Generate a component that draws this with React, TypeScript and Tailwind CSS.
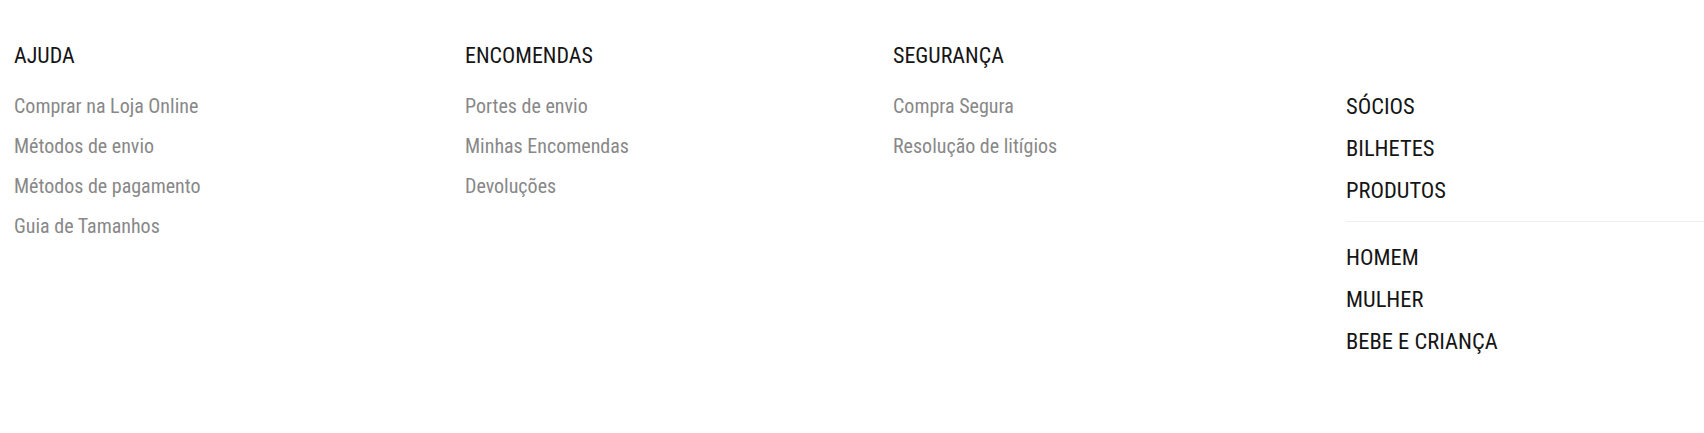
const colunas = [
  {
    titulo: "AJUDA",
    links: ["Comprar na Loja Online", "Métodos de envio", "Métodos de pagamento", "Guia de Tamanhos"],
  },
  {
    titulo: "ENCOMENDAS",
    links: ["Portes de envio", "Minhas Encomendas", "Devoluções"],
  },
  {
    titulo: "SEGURANÇA",
    links: ["Compra Segura", "Resolução de litígios"],
  },
];

const clube = ["SÓCIOS", "BILHETES", "PRODUTOS"];
const loja = ["HOMEM", "MULHER", "BEBE E CRIANÇA"];

export default function App() {
  return (
    <div
      className="w-[1704px] h-[433px] bg-white font-stretch-[75%]"
      style={{ fontFamily: '"Roboto Condensed", Roboto, "Liberation Sans", sans-serif' }}
    >
      <div className="grid grid-cols-[451px_428px_453px_1fr] pl-[14px] pt-[40px]">
        {colunas.map((col) => (
          <div key={col.titulo} className="flex flex-col">
            <h4 className="text-[22px] leading-[32px] text-[#151515]">{col.titulo}</h4>
            <ul className="mt-[14px] flex flex-col">
              {col.links.map((link) => (
                <li key={link} className="text-[20px] leading-[40px] text-[#888888]">
                  {link}
                </li>
              ))}
            </ul>
          </div>
        ))}
        <div className="flex flex-col pt-[45px]">
          <ul className="flex flex-col">
            {clube.map((item) => (
              <li key={item} className="text-[22.5px] leading-[42px] text-[#151515]">
                {item}
              </li>
            ))}
          </ul>
          <div className="border-t border-[#eeeeee] mt-[10px] mb-[14px]" />
          <ul className="flex flex-col">
            {loja.map((item) => (
              <li key={item} className="text-[22.5px] leading-[42px] text-[#151515]">
                {item}
              </li>
            ))}
          </ul>
        </div>
      </div>
    </div>
  );
}
